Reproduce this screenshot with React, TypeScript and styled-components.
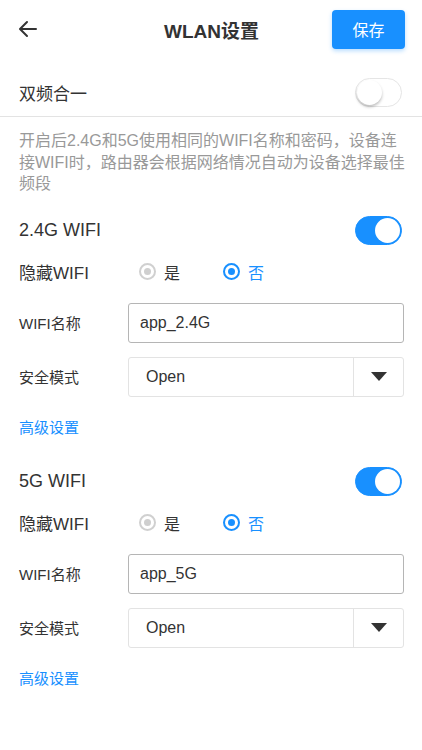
import React, { useState } from "react";
import styled, { createGlobalStyle } from "styled-components";

const GlobalStyle = createGlobalStyle`
  body {
    margin: 0;
    background: #fff;
    font-family: "Liberation Sans", "Noto Sans CJK SC", sans-serif;
    color: #333;
  }
`;

const BLUE = "#1890ff";

const Page = styled.div`
  width: 422px;
  min-height: 750px;
  background: #fff;
`;

const Header = styled.div`
  height: 58px;
  padding: 0 17px 0 18px;
  display: grid;
  grid-template-columns: 80px 1fr 80px;
  align-items: center;
`;

const BackButton = styled.button`
  border: none;
  background: none;
  padding: 0;
  width: 22px;
  height: 22px;
  display: flex;
  align-items: center;
  cursor: pointer;
`;

const Title = styled.h1`
  margin: 0;
  text-align: center;
  font-size: 19px;
  font-weight: bold;
  color: #333;
`;

const SaveButton = styled.button`
  justify-self: end;
  width: 73px;
  height: 39px;
  border: none;
  border-radius: 4px;
  background: ${BLUE};
  color: #fff;
  font-size: 16px;
  font-family: inherit;
  box-shadow: 0 2px 4px rgba(24, 144, 255, 0.3);
`;

const ToggleRow = styled.div<{ $h: number; $size: number; $top?: number }>`
  height: ${(p) => p.$h}px;
  margin-top: ${(p) => p.$top ?? 0}px;
  display: flex;
  align-items: center;
  justify-content: space-between;
  padding: 0 20px 0 19px;
  font-size: ${(p) => p.$size}px;
  color: #333;
`;

const Divider = styled.div`
  height: 1px;
  background: #e3e3e3;
`;

const Hint = styled.p`
  margin: 0;
  padding: 13px 10px 14px 19px;
  font-size: 16px;
  line-height: 21.5px;
  color: #999;
`;

const Track = styled.button<{ $on: boolean }>`
  position: relative;
  width: 47px;
  height: 29px;
  padding: 0;
  border-radius: 15px;
  border: 1px solid ${(p) => (p.$on ? BLUE : "#e5e5e5")};
  background: ${(p) => (p.$on ? BLUE : "#fff")};
  cursor: pointer;
`;

const Knob = styled.span<{ $on: boolean }>`
  position: absolute;
  top: 1px;
  left: ${(p) => (p.$on ? "19px" : "1px")};
  width: 25px;
  height: 25px;
  border-radius: 50%;
  background: #fff;
  box-shadow: ${(p) => (p.$on ? "none" : "0 2px 3px rgba(0,0,0,0.25)")};
`;

const Section = styled.div`
  display: flex;
  flex-direction: column;
  padding-bottom: 15px;
`;

const FieldRow = styled.div<{ $h: number; $top?: number }>`
  height: ${(p) => p.$h}px;
  margin-top: ${(p) => p.$top ?? 0}px;
  display: grid;
  grid-template-columns: 109px 1fr;
  align-items: center;
  padding: 0 19px;
`;

const Label = styled.span<{ $big?: boolean }>`
  font-size: ${(p) => (p.$big ? 17 : 15)}px;
  color: #333;
`;

const RadioGroup = styled.div`
  display: flex;
  align-items: center;
  padding-left: 11px;
`;

const RadioItem = styled.label<{ $on: boolean }>`
  display: flex;
  align-items: center;
  gap: 8px;
  width: 84px;
  font-size: 16px;
  color: ${(p) => (p.$on ? BLUE : "#333")};
`;

const RadioDot = styled.span<{ $on: boolean }>`
  width: 17px;
  height: 17px;
  box-sizing: border-box;
  border-radius: 50%;
  border: 2px solid ${(p) => (p.$on ? BLUE : "#d0d0d0")};
  display: flex;
  align-items: center;
  justify-content: center;
  &::after {
    content: "";
    width: 7px;
    height: 7px;
    border-radius: 50%;
    background: ${(p) => (p.$on ? BLUE : "#cfcfcf")};
  }
`;

const TextInput = styled.input`
  box-sizing: border-box;
  width: 276px;
  height: 40px;
  border: 1px solid #b5b5b5;
  border-radius: 3px;
  padding: 0 11px;
  font-size: 16px;
  font-family: inherit;
  color: #333;
  outline: none;
`;

const Select = styled.div`
  box-sizing: border-box;
  width: 276px;
  height: 40px;
  border: 1px solid #e3e3e3;
  border-radius: 3px;
  display: grid;
  grid-template-columns: 1fr 50px;
  align-items: center;
`;

const SelectValue = styled.span`
  padding-left: 17px;
  font-size: 16px;
  color: #333;
`;

const Caret = styled.span`
  height: 100%;
  border-left: 1px solid #e3e3e3;
  display: flex;
  align-items: center;
  justify-content: center;
`;

const Link = styled.a`
  display: flex;
  align-items: center;
  height: 36px;
  margin-top: 12px;
  padding: 0 19px;
  font-size: 15px;
  color: ${BLUE};
  text-decoration: none;
`;

const Switch = ({ on, onClick }: { on: boolean; onClick: () => void }) => (
  <Track $on={on} onClick={onClick}>
    <Knob $on={on} />
  </Track>
);

type BandProps = {
  name: string;
  ssid: string;
};

const Band = ({ name, ssid }: BandProps) => {
  const [enabled, setEnabled] = useState(true);
  const [hidden, setHidden] = useState(false);
  const [value, setValue] = useState(ssid);

  return (
    <Section>
      <ToggleRow $h={44} $size={18}>
        <span>{name}</span>
        <Switch on={enabled} onClick={() => setEnabled(!enabled)} />
      </ToggleRow>
      <FieldRow $h={38}>
        <Label $big>隐藏WIFI</Label>
        <RadioGroup>
          <RadioItem $on={false} onClick={() => setHidden(true)}>
            <RadioDot $on={false} />是
          </RadioItem>
          <RadioItem $on={!hidden} onClick={() => setHidden(false)}>
            <RadioDot $on={!hidden} />否
          </RadioItem>
        </RadioGroup>
      </FieldRow>
      <FieldRow $h={40} $top={12}>
        <Label>WIFI名称</Label>
        <TextInput value={value} onChange={(e) => setValue(e.target.value)} />
      </FieldRow>
      <FieldRow $h={40} $top={14}>
        <Label>安全模式</Label>
        <Select>
          <SelectValue>Open</SelectValue>
          <Caret>
            <svg width="16" height="9" viewBox="0 0 16 9">
              <path d="M0 0 H16 L8 9 Z" fill="#333" />
            </svg>
          </Caret>
        </Select>
      </FieldRow>
      <Link href="#">高级设置</Link>
    </Section>
  );
};

const App = () => {
  const [merge, setMerge] = useState(false);

  return (
    <Page>
      <GlobalStyle />
      <Header>
        <BackButton>
          <svg width="20" height="20" viewBox="0 0 20 20" fill="none" stroke="#333" strokeWidth="2" strokeLinecap="round" strokeLinejoin="round">
            <path d="M18 10 H3" />
            <path d="M9 3 L2 10 L9 17" />
          </svg>
        </BackButton>
        <Title>WLAN设置</Title>
        <SaveButton>保存</SaveButton>
      </Header>
      <ToggleRow $h={48} $size={17} $top={10}>
        <span>双频合一</span>
        <Switch on={merge} onClick={() => setMerge(!merge)} />
      </ToggleRow>
      <Divider />
      <Hint>
        开启后2.4G和5G使用相同的WIFI名称和密码，设备连
        <br />
        接WIFI时，路由器会根据网络情况自动为设备选择最佳
        <br />
        频段
      </Hint>
      <Band name="2.4G WIFI" ssid="app_2.4G" />
      <Band name="5G WIFI" ssid="app_5G" />
    </Page>
  );
};

export default App;
